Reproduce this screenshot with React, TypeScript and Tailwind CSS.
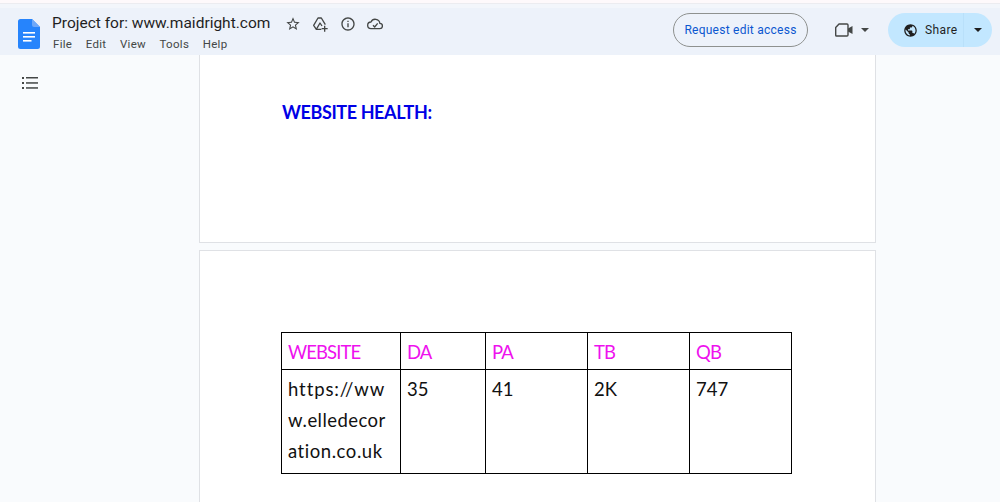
import React from "react";

const I = ({ d, s = 16, c = "#444746" }: { d: string; s?: number; c?: string }) => (
  <svg width={s} height={s} viewBox="0 0 24 24" fill={c}><path d={d} /></svg>
);
const star = "M22 9.24l-7.19-.62L12 2 9.19 8.63 2 9.24l5.46 4.73L5.82 21 12 17.27 18.18 21l-1.63-7.03L22 9.24zM12 15.4l-3.76 2.27 1-4.28-3.32-2.88 4.38-.38L12 6.1l1.71 4.04 4.38.38-3.32 2.88 1 4.28L12 15.4z";
const info = "M11 7h2v2h-2zm0 4h2v6h-2zm1-9C6.48 2 2 6.48 2 12s4.48 10 10 10 10-4.48 10-10S17.52 2 12 2zm0 18c-4.41 0-8-3.59-8-8s3.59-8 8-8 8 3.59 8 8-3.59 8-8 8z";
const globe = "M12 2C6.48 2 2 6.48 2 12s4.48 10 10 10 10-4.48 10-10S17.52 2 12 2zm-1 17.93c-3.95-.49-7-3.85-7-7.93 0-.62.08-1.21.21-1.79L9 15v1c0 1.1.9 2 2 2v1.93zm6.9-2.54c-.26-.81-1-1.39-1.9-1.39h-1v-3c0-.55-.45-1-1-1H8v-2h2c.55 0 1-.45 1-1V7h2c1.1 0 2-.9 2-2v-.41c2.93 1.19 5 4.06 5 7.41 0 2.08-.8 3.97-2.1 5.39z";

const DocLogo = () => (
  <svg width="22" height="30" viewBox="0 0 22 30">
    <path d="M2.5 0H14l8 8v19.5a2.5 2.5 0 0 1-2.5 2.5h-17A2.5 2.5 0 0 1 0 27.5v-25A2.5 2.5 0 0 1 2.5 0z" fill="#2684fc" />
    <path d="M14 0l8 8h-6a2 2 0 0 1-2-2z" fill="#6ea8f9" />
    <rect x="5" y="13" width="12" height="1.6" fill="#fff" />
    <rect x="5" y="17" width="12" height="1.6" fill="#fff" />
    <rect x="5" y="21" width="8.5" height="1.6" fill="#fff" />
  </svg>
);

const DriveAdd = () => (
  <svg width="16" height="16" viewBox="0 0 24 24" fill="none" stroke="#444746" strokeWidth="2" strokeLinejoin="round">
    <path d="M14 20H6.5L2.5 14 9 3h5l6 10" />
    <path d="M6.5 20l5.5-9.5L15 15" />
    <path d="M19 15.5v7M15.5 19h7" strokeLinecap="square" />
  </svg>
);

const CloudDone = () => (
  <svg width="16" height="16" viewBox="0 0 24 24" fill="none" stroke="#444746" strokeWidth="2" strokeLinejoin="round">
    <path d="M6 19h13a4 4 0 0 0 .3-8A7 7 0 0 0 6 9a5 5 0 0 0 0 10z" />
    <path d="M9 14l2.5 2.5L16 11" />
  </svg>
);

const Caret = ({ c = "#444746" }: { c?: string }) => (
  <svg width="8" height="4" viewBox="0 0 8 4" fill={c}><path d="M0 0h8L4 4z" /></svg>
);

const Meet = () => (
  <svg width="18" height="14" viewBox="0 0 18 14" fill="none">
    <path d="M4 1h8a1 1 0 0 1 1 1v10a1 1 0 0 1-1 1H1.5a.8.8 0 0 1-.8-.8V4.5z" stroke="#444746" strokeWidth="1.4" strokeLinejoin="round" />
    <path d="M13 5.5L17.5 3v8L13 8.5z" fill="#444746" />
  </svg>
);

const cell = "border border-black pl-[6px] text-left font-normal";

export default function App() {
  return (
    <div className="h-[502px] w-[1000px] overflow-hidden flex flex-col bg-[#f9fbfd]">
      <div className="h-[4px] bg-[#fef9fb] border-b border-[#ececf0]" />
      <div className="h-[4px] bg-[#f3f6fb]" />
      <header className="h-[47px] bg-[#edf2fa] flex items-center font-['Roboto',sans-serif]">
        <div className="w-[52px] pl-[18px] pt-[5px] flex items-center"><DocLogo /></div>
        <div className="flex flex-col pt-[1px]">
          <div className="flex items-center">
            <span className="text-[15.5px] leading-[20px] text-[#1f1f1f] w-[233px] whitespace-nowrap">Project for: www.maidright.com</span>
            <div className="flex items-center gap-[11px] pt-[2px]">
              <I d={star} s={16} />
              <DriveAdd />
              <span className="flex ml-[1px]"><I d={info} s={16} /></span>
              <CloudDone />
            </div>
          </div>
          <nav className="flex gap-[13.5px] text-[11.5px] leading-[16px] text-[#444746] tracking-[0.3px] mt-[3px] pl-[1px]">
            <span>File</span><span>Edit</span><span>View</span><span>Tools</span><span>Help</span>
          </nav>
        </div>
        <div className="ml-auto flex items-center pb-[3px]">
          <div className="w-[135px] h-[34px] rounded-full border border-[#8e918f] flex items-center justify-center text-[12px] tracking-[0.25px] text-[#0b57d0] mr-[27px] whitespace-nowrap">Request edit access</div>
          <Meet />
          <span className="ml-[8px] mr-[19px] flex"><Caret /></span>
          <div className="h-[34px] w-[104px] mr-[8px] rounded-full bg-[#c2e7ff] flex items-center">
            <div className="w-[76px] h-full flex items-center pl-[15px] gap-[7px] border-r border-[#b9e0fa]">
              <I d={globe} s={15} c="#1f1f1f" />
              <span className="text-[12px] text-[#1f1f1f] tracking-[0.4px]">Share</span>
            </div>
            <div className="flex-1 flex justify-center"><Caret c="#1f1f1f" /></div>
          </div>
        </div>
      </header>
      <div className="flex flex-1 min-h-0">
        <aside className="w-[199px] shrink-0 pl-[22px] pt-[21px]">
          <svg width="16" height="14" viewBox="0 0 16 14" fill="#444746">
            <rect x="0" y="1" width="2" height="2" /><rect x="4" y="1" width="12" height="1.5" />
            <rect x="0" y="6" width="2" height="2" /><rect x="4" y="6.2" width="12" height="1.5" />
            <rect x="0" y="11" width="2" height="2" /><rect x="4" y="11.2" width="12" height="1.5" />
          </svg>
        </aside>
        <main className="w-[677px] shrink-0 flex flex-col gap-[7px] font-['Lato',sans-serif]">
          <section className="h-[188px] shrink-0 bg-white border-l border-r border-b border-[#dfe1e5] pl-[82px] pt-[45px]">
            <h1 className="text-[18px] leading-[24px] font-bold tracking-[-0.4px] text-[#0000e6]">WEBSITE HEALTH:</h1>
          </section>
          <section className="flex-1 bg-white border-l border-r border-t border-[#dfe1e5] pl-[81px] pt-[81px]">
            <table className="border-collapse table-fixed w-[511px] text-[18.5px] text-[#111]">
              <colgroup>
                <col className="w-[119px]" /><col className="w-[85px]" /><col className="w-[102px]" /><col className="w-[102px]" /><col className="w-[102px]" />
              </colgroup>
              <thead>
                <tr className="h-[37px] text-[#ee11ee] tracking-[-0.9px]">
                  <th className={cell + " align-middle pt-[3px]"}>WEBSITE</th>
                  <th className={cell + " align-middle pt-[3px]"}>DA</th>
                  <th className={cell + " align-middle pt-[3px]"}>PA</th>
                  <th className={cell + " align-middle pt-[3px]"}>TB</th>
                  <th className={cell + " align-middle pt-[3px]"}>QB</th>
                </tr>
              </thead>
              <tbody>
                <tr className="h-[104px] leading-[31px]">
                  <td className={cell + " align-top pt-[4px]"}>
                    <div className="tracking-[0.9px]">https://ww</div>
                    <div className="tracking-[0.45px]">w.elledecor</div>
                    <div className="tracking-[0.55px]">ation.co.uk</div>
                  </td>
                  <td className={cell + " align-top pt-[4px]"}>35</td>
                  <td className={cell + " align-top pt-[4px]"}>41</td>
                  <td className={cell + " align-top pt-[4px]"}>2K</td>
                  <td className={cell + " align-top pt-[4px]"}>747</td>
                </tr>
              </tbody>
            </table>
          </section>
        </main>
      </div>
    </div>
  );
}
